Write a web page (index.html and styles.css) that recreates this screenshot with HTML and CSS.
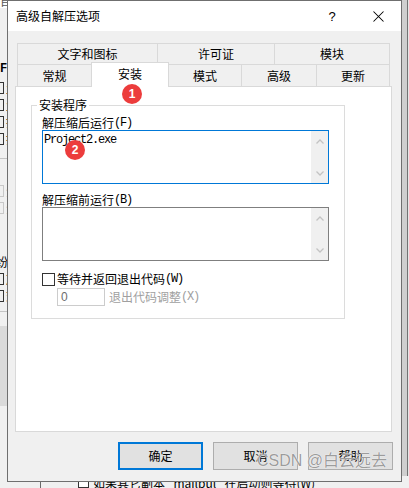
FILE: index.html
```html
<!DOCTYPE html>
<html lang="zh-CN">
<head>
<meta charset="utf-8">
<title>高级自解压选项</title>
<link rel="stylesheet" href="styles.css">
</head>
<body>
<div class="desk">
  <div class="desk-main">
    <div class="strip-left">
      <div class="sl-top"><span>自</span></div>
      <div class="sl-f">F:</div>
      <div class="sl-row first"><span class="sl-box"></span><span class="sl-ch">生</span></div>
      <div class="sl-row"><span class="sl-box"></span><span class="sl-ch">生</span></div>
      <div class="sl-row"><span class="sl-box"></span><span class="sl-ch">打</span></div>
      <div class="sl-row"><span class="sl-box"></span><span class="sl-ch">打</span></div>
      <div class="sl-hr"></div>
      <div class="sl-row dis first2"><span class="sl-box"></span><span class="sl-ch">全</span></div>
      <div class="sl-row dis"><span class="sl-box"></span><span class="sl-ch">全</span></div>
      <div class="sl-txt">纷</div>
      <div class="sl-row"><span class="sl-box"></span><span class="sl-ch">加</span></div>
      <div class="sl-row"><span class="sl-box"></span><span class="sl-ch">式</span></div>
      <div class="sl-hr low"></div>
      <div class="sl-dark"></div>
    </div>
    <div class="desk-mid"></div>
    <div class="strip-right"></div>
  </div>
  <div class="desk-bottom">
    <span class="db-line"></span>
    <span class="db-box"></span>
    <span class="db-text">如果其它副本 "mailbul" 在启动则等待(W)</span>
  </div>
</div>

<div class="dialog">
  <div class="titlebar">
    <span class="title">高级自解压选项</span>
    <span class="cap-btn help">?</span>
    <span class="cap-btn close">
      <svg width="11" height="11" viewBox="0 0 11 11"><path d="M0.5 0.5 L10.5 10.5 M10.5 0.5 L0.5 10.5" stroke="#000" stroke-width="1.05" fill="none"/></svg>
    </span>
  </div>
  <div class="dlg-body">
    <div class="tabs">
      <div class="tab-row back">
        <div class="tab">文字和图标</div>
        <div class="tab">许可证</div>
        <div class="tab">模块</div>
      </div>
      <div class="tab-row front">
        <div class="tab">常规</div>
        <div class="tab sel">安装</div>
        <div class="tab">模式</div>
        <div class="tab">高级</div>
        <div class="tab">更新</div>
      </div>
    </div>
    <div class="panel">
      <fieldset class="group">
        <legend>安装程序</legend>
        <div class="lbl">解压缩后运行<span class="lat">(F)</span></div>
        <div class="edit focus">
          <div class="edit-text">Project2.exe</div>
          <div class="vscroll">
            <svg width="8" height="5" viewBox="0 0 8 5"><polyline points="0.5,4.5 4,1 7.5,4.5" fill="none" stroke="#c3c3c3" stroke-width="1.3"/></svg>
            <svg width="8" height="5" viewBox="0 0 8 5"><polyline points="0.5,0.5 4,4 7.5,0.5" fill="none" stroke="#c3c3c3" stroke-width="1.3"/></svg>
          </div>
        </div>
        <div class="lbl lbl2">解压缩前运行<span class="lat">(B)</span></div>
        <div class="edit">
          <div class="edit-text"></div>
          <div class="vscroll">
            <svg width="8" height="5" viewBox="0 0 8 5"><polyline points="0.5,4.5 4,1 7.5,4.5" fill="none" stroke="#c3c3c3" stroke-width="1.3"/></svg>
            <svg width="8" height="5" viewBox="0 0 8 5"><polyline points="0.5,0.5 4,4 7.5,0.5" fill="none" stroke="#c3c3c3" stroke-width="1.3"/></svg>
          </div>
        </div>
        <div class="check-row">
          <span class="checkbox"></span>
          <span class="lbl">等待并返回退出代码<span class="lat">(W)</span></span>
        </div>
        <div class="input-row">
          <span class="num-input">0</span>
          <span class="lbl disabled">退出代码调整<span class="lat">(X)</span></span>
        </div>
      </fieldset>
    </div>
    <div class="buttons">
      <div class="btn def">确定</div>
      <div class="btn">取消</div>
      <div class="btn">帮助</div>
    </div>
  </div>
</div>

<span class="badge b1">1</span>
<span class="badge b2">2</span>
<div class="watermark">CSDN @白云远去</div>
</body>
</html>
```

FILE: styles.css
```css
* { box-sizing: border-box; }
html, body { margin: 0; padding: 0; }
body {
  width: 409px;
  height: 488px;
  position: relative;
  overflow: hidden;
  background: #f0f0f0;
  font-family: "Noto Sans CJK SC", "Liberation Sans", sans-serif;
  font-size: 12px;
  color: #000;
}

/* ---------- desktop behind the dialog ---------- */
.desk {
  position: absolute;
  inset: 0;
  display: flex;
  flex-direction: column;
}
.desk-main { height: 476px; display: flex; flex: none; }
.strip-left {
  width: 7px;
  flex: none;
  overflow: hidden;
  display: flex;
  flex-direction: column;
  background: #f0f0f0;
}
.sl-top { height: 8px; background: #fff; overflow: hidden; line-height: 12px; color: #555; flex: none; }
.sl-top span { display: block; margin-top: -5px; }
.sl-f { margin-top: 55px; font-family: "Liberation Mono", monospace; font-weight: bold; line-height: 12px; height: 12px; white-space: nowrap; flex: none; }
.sl-row { display: flex; height: 13px; margin-top: 4px; align-items: center; flex: none; }
.sl-row.first { margin-top: 6px; }
.sl-row.first2 { margin-top: 25px; }
.sl-box { width: 4px; height: 12px; border: 1px solid #333; border-left: none; flex: none; }
.sl-row.dis .sl-box { border-color: #c8c8c8; }
.sl-ch { margin-left: 2px; line-height: 12px; white-space: nowrap; }
.sl-row.dis .sl-ch { color: #aaa; }
.sl-hr { margin-top: 13px; height: 1px; background: #c4c4c4; flex: none; }
.sl-hr.low { margin-top: 9px; }
.sl-txt { margin-top: 42px; line-height: 12px; height: 12px; margin-left: -4px; flex: none; }
.sl-dark { margin-top: 14px; height: 80px; background: #dadada; flex: none; }

.desk-mid { flex: 1; }
.strip-right {
  width: 8px;
  flex: none;
  background: linear-gradient(to right, #cfcfcf 0 6px, #737373 6px 7px, #e6e6e6 7px);
}
.desk-bottom {
  flex: 1;
  display: flex;
  align-items: flex-start;
  background: #f0f0f0;
}
.db-line { width: 1px; align-self: stretch; background: #6a6a6a; margin-left: 40px; }
.db-box { width: 11px; height: 11px; border: 1px solid #333; margin: 1px 0 0 37px; background: #fff; }
.db-text { margin-left: 4px; line-height: 14px; white-space: nowrap; }

/* ---------- dialog window ---------- */
.dialog {
  position: absolute;
  left: 7px;
  top: 0;
  width: 395px;
  height: 482px;
  border: 1px solid #6f6f6f;
  background: #f0f0f0;
  display: flex;
  flex-direction: column;
}
.titlebar {
  height: 30px;
  flex: none;
  background: #fff;
  display: flex;
  align-items: center;
  padding-left: 8px;
}
.title { flex: 1; line-height: 14px; }
.cap-btn {
  width: 46px;
  height: 30px;
  display: flex;
  align-items: center;
  justify-content: center;
}
.help { font-family: "Liberation Sans", sans-serif; font-size: 13px; }
.close svg { display: block; }

.dlg-body {
  flex: 1;
  padding: 12px 0 0 7px;
  display: flex;
  flex-direction: column;
}
.tabs { width: 373px; margin-left: 2px; }
.tab-row { display: grid; }
.back { grid-template-columns: 140px 117px 116px; grid-template-rows: 21px; }
.front { grid-template-columns: 74px 77px 73px 75px 74px; grid-template-rows: 22px; }
.tab {
  border-top: 1px solid #d9d9d9;
  border-left: 1px solid #d9d9d9;
  background: #f0f0f0;
  display: flex;
  align-items: center;
  justify-content: center;
  line-height: 14px;
}
.tab:last-child { border-right: 1px solid #d9d9d9; }
.tab.sel {
  background: #fff;
  border-right: 1px solid #d9d9d9;
  width: 78px;
  height: 25px;
  margin-top: -2px;
  padding-bottom: 3px;
  align-self: start;
  justify-self: start;
  position: relative;
  z-index: 1;
}

.panel {
  width: 377px;
  height: 346px;
  flex: none;
  border: 1px solid #d9d9d9;
  background: #fff;
  padding: 11px 0 0 15px;
}
.group {
  margin: 0;
  width: 314px;
  min-width: 0;
  border: 1px solid #dcdcdc;
  padding: 4px 10px 12px 10px;
}
.group legend {
  padding: 0 2px;
  margin-left: -5px;
  line-height: 14px;
  height: 14px;
  font-size: 12px;
}
.lbl { display: block; line-height: 14px; height: 14px; white-space: nowrap; }
.lat {
  font-family: "Liberation Mono", monospace;
  letter-spacing: -1.2px;
  line-height: 14px;
  vertical-align: top;
}
.lbl2 { margin-top: 9px; }
.edit {
  width: 287px;
  height: 54px;
  border: 1px solid #7f7f7f;
  background: #fff;
  display: flex;
}
.edit.focus { border-color: #0078d7; }
.edit-text {
  flex: 1;
  padding: 2px 0 0 1px;
  font-family: "Liberation Mono", monospace;
  letter-spacing: -1.2px;
  line-height: 14px;
}
.vscroll {
  width: 17px;
  flex: none;
  background: #f0f0f0;
  display: flex;
  flex-direction: column;
  justify-content: space-between;
  align-items: center;
  padding: 8px 0 7px;
}
.vscroll svg { display: block; }

.check-row {
  display: flex;
  align-items: center;
  gap: 2px;
  height: 14px;
  margin-top: 11px;
}
.checkbox {
  width: 13px;
  height: 13px;
  border: 1px solid #333;
  background: #fff;
  flex: none;
}
.input-row {
  display: flex;
  align-items: center;
  gap: 4px;
  height: 18px;
  margin: 2px 0 0 15px;
}
.num-input {
  width: 48px;
  height: 18px;
  border: 1px solid #cccccc;
  padding-left: 3px;
  font-family: "Liberation Sans", sans-serif;
  font-size: 12px;
  line-height: 16px;
  color: #6d6d6d;
}
.disabled { color: #a0a0a0; }

.buttons {
  display: flex;
  justify-content: flex-end;
  gap: 10px;
  margin-top: 10px;
  padding-right: 8px;
}
.btn {
  width: 85px;
  height: 28px;
  border: 1px solid #adadad;
  background: #e1e1e1;
  display: flex;
  align-items: center;
  justify-content: center;
  line-height: 14px;
}
.btn.def { border: 2px solid #0078d7; }

/* ---------- overlays ---------- */
.badge {
  position: absolute;
  width: 20px;
  height: 20px;
  border-radius: 50%;
  background: #ec3c3c;
  color: #fff;
  font-family: "Liberation Sans", sans-serif;
  font-weight: bold;
  font-size: 12px;
  display: flex;
  align-items: center;
  justify-content: center;
  z-index: 5;
}
.b1 { left: 122px; top: 84px; }
.b2 { left: 65px; top: 140px; }
.watermark {
  position: absolute;
  left: 257px;
  top: 451px;
  font-family: "Liberation Sans", "Noto Sans CJK SC", sans-serif;
  font-size: 16px;
  line-height: 20px;
  color: #9c9c9c;
  text-shadow: 0 0 1px #fff, 0 0 1px #fff;
  white-space: nowrap;
  z-index: 6;
}
```
